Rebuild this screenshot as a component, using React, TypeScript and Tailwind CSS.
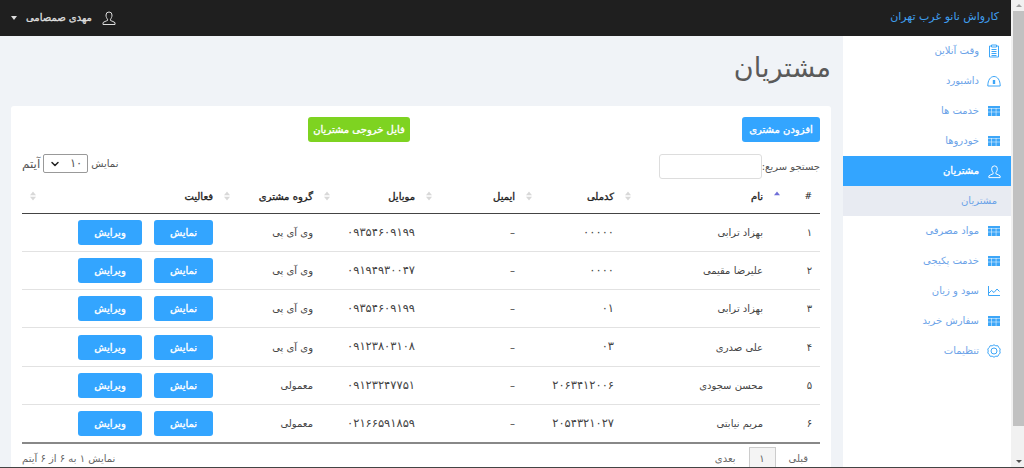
import { ChevronDown } from 'lucide-react';

const font = '[font-family:"DejaVu_Sans","Noto_Sans",sans-serif]';
const heavy = '[-webkit-text-stroke:0.35px_currentColor]';

const rows = [
  { id: '۱', name: 'بهزاد ترابی', code: '۰۰۰۰۰', mobile: '۰۹۳۵۴۶۰۹۱۹۹', group: 'وی آی پی' },
  { id: '۲', name: 'علیرضا مقیمی', code: '۰۰۰۰', mobile: '۰۹۱۹۴۹۳۰۰۴۷', group: 'وی آی پی' },
  { id: '۳', name: 'بهزاد ترابی', code: '۰۱', mobile: '۰۹۳۵۴۶۰۹۱۹۹', group: 'وی آی پی' },
  { id: '۴', name: 'علی صدری', code: '۰۳', mobile: '۰۹۱۲۳۸۰۳۱۰۸', group: 'وی آی پی' },
  { id: '۵', name: 'محسن سجودی', code: '۲۰۶۳۴۱۲۰۰۶', mobile: '۰۹۱۲۳۲۴۷۷۵۱', group: 'معمولی' },
  { id: '۶', name: 'مریم نیابتی', code: '۲۰۵۴۳۲۱۰۲۷', mobile: '۰۲۱۶۶۵۹۱۸۵۹', group: 'معمولی' },
];

function UserIcon({ className }: { className?: string }) {
  return (
    <svg viewBox="0 0 16 16" className={className} fill="none" stroke="currentColor" strokeWidth="1">
      <path d="M5 5a3 3 0 0 1 6 0c0 2-.8 3.4-1.5 4.2v1.3c1.6.6 3.5 1.3 4.5 2.2v1.8H2v-1.8c1-.9 2.9-1.6 4.5-2.2V9.200C5.800 8.400 5 7 5 5z" />
    </svg>
  );
}

function GridIcon() {
  return (
    <svg viewBox="0 0 12 10" className="w-3 h-2.5 text-[#3da6f8]" fill="currentColor">
      <path d="M0 0h12v2H0z" />
      <path d="M0 2.500h3.500v3.200H0zM4 2.500h3.800v3.200H4zM8.300 2.500H12v3.200H8.300zM0 6.200h3.500V10H0zM4 6.200h3.800V10H4zM8.300 6.200H12V10H8.300z" />
    </svg>
  );
}

function ClipIcon() {
  return (
    <svg viewBox="0 0 12 14" className="w-3 h-3.5 text-[#3da6f8]" fill="none" stroke="currentColor" strokeWidth="1">
      <path d="M3.500 2H1.500v11h9V2H8.500M3.500 1h5v2h-5zM3.500 5.500h5M3.500 7.500h5M3.500 9.500h5M3.500 11.500h5" />
    </svg>
  );
}

function GaugeIcon() {
  return (
    <svg viewBox="0 0 14 12" className="w-3.5 h-3 text-[#3da6f8]" fill="none" stroke="currentColor" strokeWidth="1">
      <path d="M.8 11C.8 5 3.500 1.500 7 1.500S13.200 5 13.200 11z" />
      <path d="M7 5v4" strokeWidth="2.400" />
    </svg>
  );
}

function ChartIcon() {
  return (
    <svg viewBox="0 0 12 10" className="w-3 h-2.5 text-[#3da6f8]" fill="none" stroke="currentColor" strokeWidth="1">
      <path d="M.5 0v9.500H12" />
      <path d="M1 7l2.500-2.500L6 6.500 9 3l2.500 2.500" />
    </svg>
  );
}

function GearIcon() {
  return (
    <svg viewBox="0 0 14 14" className="w-3.5 h-3.5 text-[#3da6f8]" fill="none" stroke="currentColor" strokeWidth="1">
      <path d="M7 .8l1.800 1 2-.1 1 1.800 1.400 1.500-.4 2 .4 2-1.400 1.500-1 1.800-2-.1-1.800 1-1.800-1-2 .1-1-1.800L.8 9l.4-2-.4-2 1.400-1.500 1-1.800 2 .1z" />
      <circle cx="7" cy="7" r="3" />
    </svg>
  );
}

function SideItem({ icon, label, active }: { icon: React.ReactNode; label: string; active?: boolean }) {
  return (
    <div className={`h-[30px] flex items-center pr-[9px] gap-[7px] ${active ? `bg-[#33a5ff] text-white ${heavy}` : 'text-[#6ca3e8]'}`}>
      <span className="w-[16px] flex justify-center [-webkit-text-stroke:0]">{icon}</span>
      <span className="text-[10px] pb-[2px]">{label}</span>
    </div>
  );
}

function SortIcon({ up }: { up?: boolean }) {
  return (
    <svg viewBox="0 0 8 12" className="w-[6px] h-[10px]">
      <path d="M4 0l4 5H0z" fill={up ? '#6f6fd8' : '#d8d8d8'} />
      {!up && <path d="M4 12L0 7h8z" fill="#d8d8d8" />}
    </svg>
  );
}

function Th({ label, up }: { label: string; up?: boolean }) {
  return (
    <th className="pr-[6px] font-normal">
      <div className="flex items-center gap-[11px]">
        <SortIcon up={up} />
        <span className={`text-[10px] text-[#222] ${heavy}`}>{label}</span>
      </div>
    </th>
  );
}

function Btn({ label, className }: { label: string; className: string }) {
  return (
    <button className={`h-[25px] rounded-[3px] bg-[#33a5ff] text-white text-[10px] ${heavy} ${className}`}>{label}</button>
  );
}

export default function App() {
  return (
    <div className={`h-[468px] w-[1024px] overflow-hidden flex flex-col ${font}`}>
      <div className="flex h-[467px]">
        <div className="w-[1011px] flex flex-col">
          <header dir="rtl" className="h-9 shrink-0 bg-[#1f1f1f] flex items-center justify-between pr-[12px] pl-[11px]">
            <span className="text-[11px] text-[#3f9ff0] pb-[2px]">کارواش نانو غرب تهران</span>
            <div className="flex items-center gap-[9px] text-[#dddddd]">
              <UserIcon className="w-[16px] h-[16px]" />
              <span className={`text-[10px] pb-[2px] ${heavy}`}>مهدی صمصامی</span>
              <span className="w-0 h-0 border-x-[3px] border-x-transparent border-t-[4px] border-t-[#dddddd]" />
            </div>
          </header>
          <div dir="rtl" className="flex flex-1 min-h-0">
            <aside className="w-[168px] shrink-0 bg-white">
              <SideItem icon={<ClipIcon />} label="وقت آنلاین" />
              <SideItem icon={<GaugeIcon />} label="داشبورد" />
              <SideItem icon={<GridIcon />} label="خدمت ها" />
              <SideItem icon={<GridIcon />} label="خودروها" />
              <SideItem icon={<UserIcon className="w-[15px] h-[15px]" />} label="مشتریان" active />
              <div className="h-[30px] bg-[#e8ebf2] flex items-center pr-[14px] pb-[2px] text-[10px] text-[#6ca3e8]">مشتریان</div>
              <SideItem icon={<GridIcon />} label="مواد مصرفی" />
              <SideItem icon={<GridIcon />} label="خدمت پکیجی" />
              <SideItem icon={<ChartIcon />} label="سود و زیان" />
              <SideItem icon={<GridIcon />} label="سفارش خرید" />
              <SideItem icon={<GearIcon />} label="تنظیمات" />
            </aside>
            <main className="w-[843px] bg-[#f0f3f7] pr-[12px] pl-[11px] overflow-hidden">
              <h1 className="h-[70px] flex items-center pb-[8px] text-[27px] leading-none text-[#5a5a5a]">مشتریان</h1>
              <div className="bg-white rounded-[3px] px-[11px] pt-[11px] h-[400px]">
                <div className="flex h-[25px] gap-[332px]">
                  <Btn label="افزودن مشتری" className="w-[78px]" />
                  <Btn label="فایل خروجی مشتریان" className="w-[102px] !bg-[#7ed321]" />
                </div>
                <div className="flex justify-between mt-[12px] h-[26px] text-[10px] text-[#555]">
                  <div className="flex items-start">
                    <span className="leading-[26px]">جستجو سریع:</span>
                    <div className="w-[103px] h-[25px] border border-[#ddd] rounded-[3px] bg-white" />
                  </div>
                  <div className="flex items-center h-[19px] gap-[3px]">
                    <span>نمایش</span>
                    <div className="w-[45px] h-[19px] border border-[#999] rounded-[2px] flex items-center justify-between px-[5px]">
                      <span className="text-[11.5px]">۱۰</span>
                      <ChevronDown className="w-3 h-3 text-[#222]" strokeWidth={3} />
                    </div>
                    <span className="text-[12px]">آیتم</span>
                  </div>
                </div>
                <table className="w-[798px] table-fixed border-collapse">
                  <colgroup>
                    <col className="w-[34px]" />
                    <col className="w-[149px]" />
                    <col className="w-[99px]" />
                    <col className="w-[100px]" />
                    <col className="w-[102px]" />
                    <col className="w-[100px]" />
                    <col className="w-[200px]" />
                    <col className="w-[14px]" />
                  </colgroup>
                  <thead>
                    <tr className="h-[33px] border-b border-[#444]">
                      <th className="pr-[8px] text-right text-[9px] font-normal text-[#222]">#</th>
                      <Th label="نام" up />
                      <Th label="کدملی" />
                      <Th label="ایمیل" />
                      <Th label="موبایل" />
                      <Th label="گروه مشتری" />
                      <Th label="فعالیت" />
                      <th className="text-center"><SortIcon /></th>
                    </tr>
                  </thead>
                  <tbody className="text-[10px] text-[#444]">
                    {rows.map((row, i) => (
                      <tr key={row.id} className={`h-[38.3px] ${i < rows.length - 1 ? 'border-b border-[#e2e2e2]' : 'border-b-2 border-[#888]'}`}>
                        <td className="pr-[8px]">{row.id}</td>
                        <td className="pr-[23px]">{row.name}</td>
                        <td className="pr-[23px] text-[11.5px]">{row.code}</td>
                        <td className="pr-[23px]">–</td>
                        <td className="pr-[23px] text-[11.5px]">{row.mobile}</td>
                        <td className="pr-[23px]">{row.group}</td>
                        <td className="pr-[23px]">
                          <div className="flex gap-[12px]">
                            <Btn label="نمایش" className="w-[59px]" />
                            <Btn label="ویرایش" className="w-[64px]" />
                          </div>
                        </td>
                        <td />
                      </tr>
                    ))}
                  </tbody>
                </table>
                <div className="flex justify-between text-[10px] text-[#666] mt-[3px]">
                  <div className="flex items-start gap-[13px] pr-[12px]">
                    <span className="leading-[24px]">قبلی</span>
                    <span className="w-[27px] h-[24px] border border-[#ccc] bg-[#f4f4f4] flex items-center justify-center">۱</span>
                    <span className="leading-[24px]">بعدی</span>
                  </div>
                  <span className="leading-[24px]">نمایش ۱ به ۶ از ۶ آیتم</span>
                </div>
              </div>
            </main>
          </div>
        </div>
        <div className="w-[13px] bg-[#f1f1f1] flex flex-col items-end">
          <div className="h-[11px] w-[11px] flex items-center justify-center">
            <span className="w-0 h-0 border-x-[3px] border-x-transparent border-b-[3px] border-b-[#a0a0a0]" />
          </div>
          <div className="w-[11px] h-[415px] bg-[#c1c1c1]" />
          <div className="flex-1" />
          <div className="h-[11px] w-[11px] flex items-center justify-center">
            <span className="w-0 h-0 border-x-[3px] border-x-transparent border-t-[3px] border-t-[#505050]" />
          </div>
        </div>
      </div>
      <div className="h-px bg-[#444]" />
    </div>
  );
}
